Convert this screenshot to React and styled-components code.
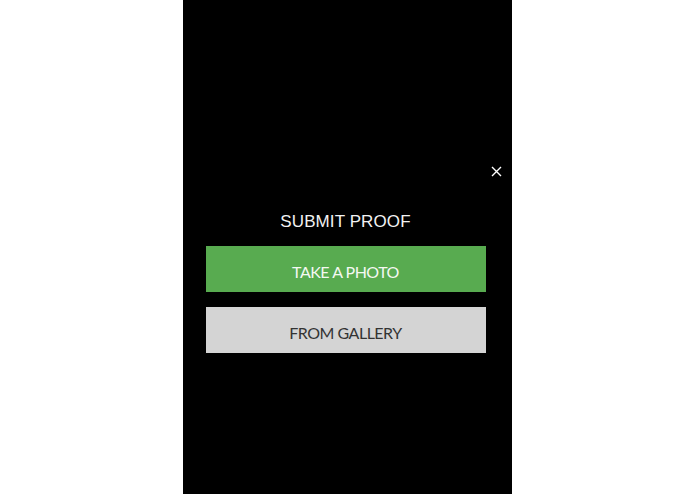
import React from "react";
import styled, { createGlobalStyle } from "styled-components";

const GlobalStyle = createGlobalStyle`
  html, body {
    margin: 0;
    padding: 0;
    background: #fff;
  }
  body {
    font-family: Lato, "Liberation Sans", Arial, sans-serif;
  }
`;

function App() {
  return (
    <>
      <GlobalStyle />
      <Page>
        <Sheet>
          <CloseRow>
            <CloseButton aria-label="close">
              <svg width="11" height="11" viewBox="0 0 11 11">
                <path
                  d="M1 1 L10 10 M10 1 L1 10"
                  stroke="#fff"
                  strokeWidth="1.4"
                  fill="none"
                />
              </svg>
            </CloseButton>
          </CloseRow>

          <Title>SUBMIT PROOF</Title>

          <ButtonList>
            <ActionButton primary>TAKE A PHOTO</ActionButton>
            <ActionButton>FROM GALLERY</ActionButton>
          </ButtonList>
        </Sheet>
      </Page>
    </>
  );
}

export default App;

const Page = styled.div`
  display: flex;
  justify-content: center;
  width: 100%;
  height: 494px;
`;

const Sheet = styled.div`
  display: flex;
  flex-direction: column;
  align-items: center;
  width: 329px;
  height: 100%;
  background: #000;
  padding: 165px 4px 0 0;
  box-sizing: border-box;
`;

const CloseRow = styled.div`
  display: flex;
  justify-content: flex-end;
  width: 100%;
  padding-right: 5px;
  box-sizing: border-box;
`;

const CloseButton = styled.button`
  display: flex;
  align-items: center;
  justify-content: center;
  width: 13px;
  height: 13px;
  padding: 0;
  border: none;
  background: transparent;
  cursor: pointer;
`;

const Title = styled.h2`
  margin: 34px 0 0;
  font-family: "Liberation Sans", Arial, sans-serif;
  font-weight: normal;
  font-size: 17px;
  line-height: 20px;
  color: #f2f2f2;
  letter-spacing: 0.1px;
`;

const ButtonList = styled.div`
  display: flex;
  flex-direction: column;
  gap: 15px;
  margin-top: 14px;
`;

const ActionButton = styled.button`
  width: 280px;
  height: 46px;
  padding: 4px 0 0;
  border: none;
  border-radius: 0;
  font-family: Lato, "Liberation Sans", Arial, sans-serif;
  font-size: 16px;
  letter-spacing: -0.5px;
  background: ${(p) => (p.primary ? "#58ab50" : "#d4d4d4")};
  color: ${(p) => (p.primary ? "#f4f8f2" : "#333")};
  cursor: pointer;
`;
